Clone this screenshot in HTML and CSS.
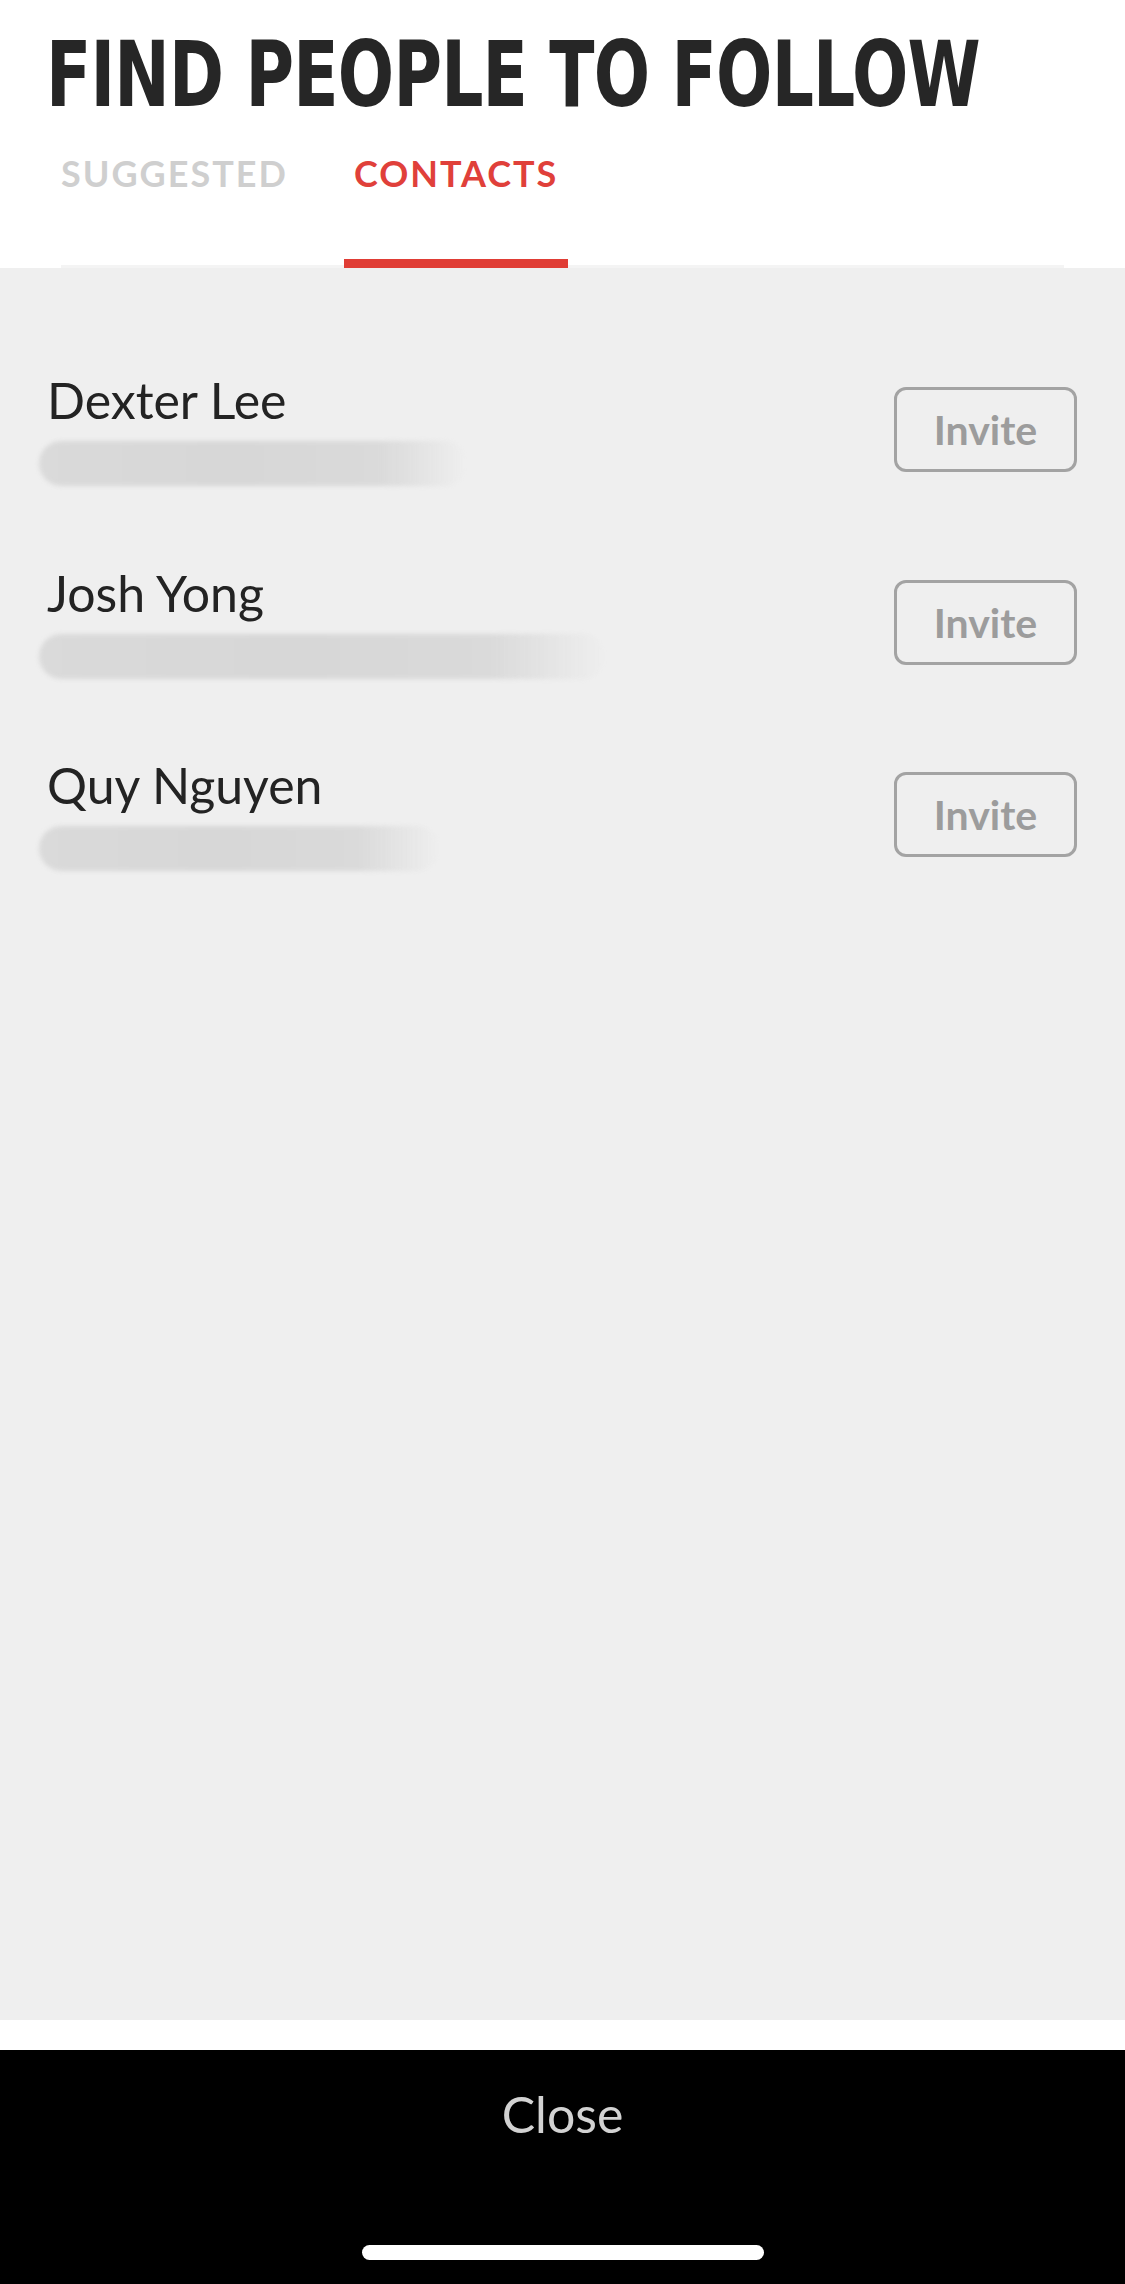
FILE: index.html
```html
<!DOCTYPE html>
<html>
<head>
<meta charset="utf-8">
<link rel="stylesheet" href="styles.css">
</head>
<body>
<div class="screen">
  <header class="header">
    <h1 class="title"><span class="title-text">FIND PEOPLE TO FOLLOW</span></h1>
    <nav class="tabs">
      <div class="tab">SUGGESTED</div>
      <div class="tab tab-active">CONTACTS</div>
    </nav>
  </header>
  <main class="list">
    <div class="row">
      <div class="info">
        <div class="name">Dexter Lee</div>
        <div class="bar bar-1"></div>
      </div>
      <button class="invite">Invite</button>
    </div>
    <div class="row">
      <div class="info">
        <div class="name">Josh Yong</div>
        <div class="bar bar-2"></div>
      </div>
      <button class="invite">Invite</button>
    </div>
    <div class="row">
      <div class="info">
        <div class="name">Quy Nguyen</div>
        <div class="bar bar-3"></div>
      </div>
      <button class="invite">Invite</button>
    </div>
  </main>
  <div class="strip"></div>
  <footer class="footer">
    <div class="close">Close</div>
    <div class="home-indicator"></div>
  </footer>
</div>
</body>
</html>
```
FILE: styles.css
```css
html, body {
  margin: 0;
  padding: 0;
  background: #ffffff;
}
.screen {
  width: 1125px;
  height: 2284px;
  display: flex;
  flex-direction: column;
  overflow: hidden;
}
.header {
  height: 268px;
  background: #ffffff;
  display: flex;
  flex-direction: column;
}
.title {
  margin: 30px 0 0 46px;
  height: 90px;
  font-family: "DejaVu Sans Condensed", "DejaVu Sans", sans-serif;
  font-stretch: condensed;
  font-weight: 700;
  font-size: 91px;
  line-height: 90px;
  color: #262626;
  white-space: nowrap;
}
.title-text {
  display: inline-block;
  transform-origin: 0 0;
  transform: scaleX(0.81);
  letter-spacing: -1px;
}
.tabs {
  margin: auto 61px 0 61px;
  display: flex;
  border-bottom: 3px solid #f4f4f4;
  height: 116px;
}
.tab {
  font-family: "Lato", "Liberation Sans", sans-serif;
  font-weight: 700;
  font-size: 36px;
  line-height: 48px;
  letter-spacing: 2px;
  color: #cfcfcf;
}
.tab-active {
  color: #e0403a;
  margin-left: 56px;
  padding: 0 10px;
  border-bottom: 9px solid #e03d35;
  margin-bottom: -3px;
  box-sizing: border-box;
  height: 119px;
}
.list {
  flex: 1;
  background: #efefef;
  padding: 102px 48px 0 39px;
  display: flex;
  flex-direction: column;
  gap: 76.5px;
}
.row {
  display: flex;
  justify-content: space-between;
  align-items: flex-start;
}
.info {
  display: flex;
  flex-direction: column;
}
.name {
  font-family: "Lato", "Liberation Sans", sans-serif;
  font-size: 50px;
  line-height: 60px;
  color: #232323;
  padding-left: 8px;
}
.bar {
  margin-top: 11px;
  height: 45px;
  border-radius: 23px;
  background: linear-gradient(to right, #dadada 0%, #d7d7d7 45%, #dadada 80%, rgba(239,239,239,0) 100%);
  filter: blur(2px);
}
.bar-1 { width: 427px; }
.bar-2 { width: 566px; }
.bar-3 { width: 400px; }
.invite {
  margin-top: 17px;
  width: 183px;
  height: 85px;
  border: 3px solid #a3a3a3;
  border-radius: 12px;
  background: transparent;
  font-family: "Lato", "Liberation Sans", sans-serif;
  font-weight: 700;
  font-size: 41px;
  color: #9c9c9c;
  padding: 0;
}
.strip {
  height: 30px;
  background: #ffffff;
}
.footer {
  height: 234px;
  background: #000000;
  display: flex;
  flex-direction: column;
  align-items: center;
}
.close {
  margin-top: 34px;
  font-family: "Lato", "Liberation Sans", sans-serif;
  font-size: 50px;
  line-height: 60px;
  color: #d2d2d2;
}
.home-indicator {
  margin-top: auto;
  margin-bottom: 24px;
  width: 402px;
  height: 15px;
  border-radius: 8px;
  background: #ffffff;
}
```
